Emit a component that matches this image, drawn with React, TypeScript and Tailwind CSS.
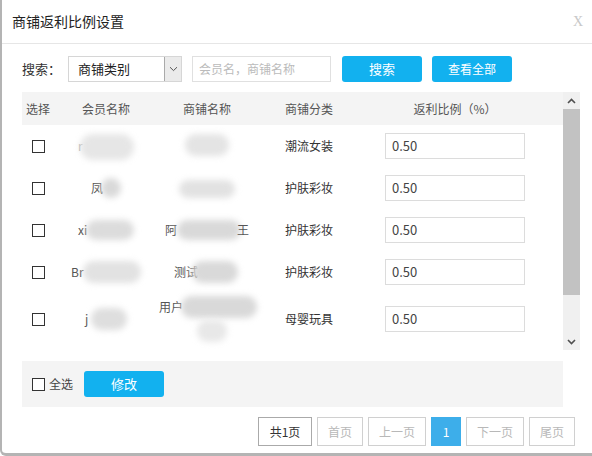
import React from 'react';

const font = { fontFamily: '"Noto Sans CJK SC", "Noto Sans", sans-serif' };

type Row = {
  member: React.ReactNode;
  shop: React.ReactNode;
  category: string;
  tall?: boolean;
};

function Blob({ className }: { className: string }) {
  return <span className={`absolute rounded-full bg-[#d9d9d9] blur-[3px] ${className}`} />;
}

const rows: Row[] = [
  {
    member: (
      <span className="relative inline-block w-[56px] h-[24px]">
        <span className="absolute left-[0px] top-[3px] text-[#aaa]">r</span>
        <Blob className="left-[2px] top-[0px] w-[54px] h-[26px] bg-[#e6e6e6]" />
      </span>
    ),
    shop: (
      <span className="relative inline-block w-[44px] h-[24px]">
        <Blob className="left-[0px] top-[0px] w-[44px] h-[22px] bg-[#e4e4e4]" />
      </span>
    ),
    category: '潮流女装',
  },
  {
    member: (
      <span className="relative inline-block w-[30px] h-[20px]">
        <span className="absolute left-[0px] top-[1px]">凤</span>
        <Blob className="left-[10px] top-[0px] w-[20px] h-[20px] bg-[#d6d6d6]" />
      </span>
    ),
    shop: (
      <span className="relative inline-block w-[56px] h-[20px]">
        <Blob className="left-[0px] top-[2px] w-[56px] h-[18px] bg-[#e2e2e2]" />
      </span>
    ),
    category: '护肤彩妆',
  },
  {
    member: (
      <span className="relative inline-block w-[56px] h-[20px]">
        <span className="absolute left-[0px] top-[1px]">xi</span>
        <Blob className="left-[8px] top-[0px] w-[48px] h-[20px] bg-[#dcdcdc]" />
      </span>
    ),
    shop: (
      <span className="relative inline-block w-[84px] h-[20px]">
        <span className="absolute left-[0px] top-[1px]">阿</span>
        <Blob className="left-[12px] top-[0px] w-[64px] h-[20px] bg-[#c8c8c8]" />
        <span className="absolute right-[0px] top-[1px]">王</span>
      </span>
    ),
    category: '护肤彩妆',
  },
  {
    member: (
      <span className="relative inline-block w-[70px] h-[22px]">
        <span className="absolute left-[0px] top-[2px]">Br</span>
        <Blob className="left-[12px] top-[0px] w-[58px] h-[22px] bg-[#e2e2e2]" />
      </span>
    ),
    shop: (
      <span className="relative inline-block w-[66px] h-[22px]">
        <span className="absolute left-[0px] top-[2px]">测试</span>
        <Blob className="left-[18px] top-[0px] w-[46px] h-[22px] bg-[#d4d4d4]" />
      </span>
    ),
    category: '护肤彩妆',
  },
  {
    member: (
      <span className="relative inline-block w-[42px] h-[22px]">
        <span className="absolute left-[0px] top-[2px]">j</span>
        <Blob className="left-[6px] top-[0px] w-[36px] h-[22px] bg-[#dedede]" />
      </span>
    ),
    shop: (
      <span className="relative inline-block w-[98px] h-[46px]">
        <span className="absolute left-[0px] top-[2px]">用户</span>
        <Blob className="left-[22px] top-[0px] w-[76px] h-[22px] bg-[#cfcfcf]" />
        <Blob className="left-[38px] top-[24px] w-[30px] h-[22px] bg-[#e8e8e8]" />
      </span>
    ),
    category: '母婴玩具',
    tall: true,
  },
];

function Checkbox() {
  return <span className="inline-block w-[13px] h-[13px] border border-[#333] bg-white" />;
}

const cols = 'grid grid-cols-[31px_106px_96px_108px_184px_16px] items-center';

export default function App() {
  return (
    <div
      className="w-[592px] h-[456px] bg-white border-l-2 border-b-[3px] border-[#b4b4b4] rounded-bl-[6px] text-[#333] overflow-hidden"
      style={font}
    >
      <div className="h-[44px] border-b border-[#e6e6e6] flex items-center justify-between pl-[10px] pr-[9px]">
        <span className="text-[14px] text-[#222]">商铺返利比例设置</span>
        <span className="text-[14px] text-[#c8c8c8]" style={{ fontFamily: '"Liberation Serif", serif' }}>
          X
        </span>
      </div>

      <div className="pl-[20px] pr-[12px]">
        <div className="flex items-center mt-[12px] h-[26px] text-[12px]">
          <span className="w-[46px] text-[13px] text-[#333]">搜索：</span>
          <div className="w-[114px] h-[26px] border border-[#d6d6d6] flex items-center justify-between">
            <span className="pl-[9px] text-[13px] text-[#222]">商铺类别</span>
            <span className="w-[17px] h-[24px] bg-[#ebebeb] border-l border-[#aaa] flex items-center justify-center">
              <svg width="9" height="6" viewBox="0 0 9 6">
                <path d="M1 1.2 L4.5 4.6 L8 1.2" stroke="#555" strokeWidth="1" fill="none" />
              </svg>
            </span>
          </div>
          <div className="ml-[10px] w-[139px] h-[26px] border border-[#e0e0e0] flex items-center pl-[6px] text-[#bbb]">
            会员名，商铺名称
          </div>
          <button className="ml-[11px] w-[80px] h-[26px] rounded-[3px] bg-[#12b1ef] text-white text-[13px]">
            搜索
          </button>
          <button className="ml-[10px] w-[80px] h-[26px] rounded-[3px] bg-[#12b1ef] text-white text-[12px]">
            查看全部
          </button>
        </div>

        <div className="mt-[10px] flex h-[258px]">
          <div className="w-[541px] text-[12px]">
            <div className={`h-[33px] bg-[#f4f4f4] text-[#555] ${cols}`}>
              <span className="pl-[4px]">选择</span>
              <span className="text-center">会员名称</span>
              <span className="text-center">商铺名称</span>
              <span className="text-center">商铺分类</span>
              <span className="text-center">返利比例（%）</span>
              <span />
            </div>
            {rows.map((r, i) => (
              <div key={i} className={`text-[#555] ${cols} ${r.tall ? 'h-[52px]' : 'h-[42px]'}`}>
                <span className="flex justify-center pl-[2px]">
                  <Checkbox />
                </span>
                <span className="flex justify-center">{r.member}</span>
                <span className="flex justify-center">{r.shop}</span>
                <span className="text-center text-[#333]">{r.category}</span>
                <span className="flex justify-center">
                  <span className="w-[140px] h-[26px] border border-[#dcdcdc] flex items-center pl-[6px] text-[13px] text-[#444]">
                    0.50
                  </span>
                </span>
                <span />
              </div>
            ))}
          </div>
          <div className="w-[17px] bg-[#f0f0f0] flex flex-col">
            <div className="h-[17px] flex items-center justify-center">
              <svg width="9" height="6" viewBox="0 0 9 6">
                <path d="M1 5 L4.5 1.5 L8 5" stroke="#505050" strokeWidth="1.6" fill="none" />
              </svg>
            </div>
            <div className="h-[186px] bg-[#c2c2c2]" />
            <div className="flex-1" />
            <div className="h-[17px] flex items-center justify-center">
              <svg width="9" height="6" viewBox="0 0 9 6">
                <path d="M1 1 L4.5 4.5 L8 1" stroke="#505050" strokeWidth="1.6" fill="none" />
              </svg>
            </div>
          </div>
        </div>

        <div className="mt-[11px] w-[541px] h-[46px] bg-[#f4f4f4] flex items-center pl-[10px] text-[12px]">
          <Checkbox />
          <span className="ml-[4px] text-[#444]">全选</span>
          <button className="ml-[11px] w-[80px] h-[26px] rounded-[3px] bg-[#12b1ef] text-white text-[13px]">
            修改
          </button>
        </div>

        <div className="mt-[10px] flex justify-end gap-[5px] pr-[5px] text-[12px]">
          <span className="h-[29px] w-[54px] border border-[#aaa] flex items-center justify-center text-[#333]">共1页</span>
          <span className="h-[29px] w-[46px] border border-[#d0d0d0] flex items-center justify-center text-[#b8b8b8]">首页</span>
          <span className="h-[29px] w-[58px] border border-[#d0d0d0] flex items-center justify-center text-[#b8b8b8]">上一页</span>
          <span className="h-[29px] w-[30px] bg-[#3daeea] flex items-center justify-center text-white">1</span>
          <span className="h-[29px] w-[58px] border border-[#d0d0d0] flex items-center justify-center text-[#b8b8b8]">下一页</span>
          <span className="h-[29px] w-[46px] border border-[#d0d0d0] flex items-center justify-center text-[#b8b8b8]">尾页</span>
        </div>
      </div>
    </div>
  );
}
